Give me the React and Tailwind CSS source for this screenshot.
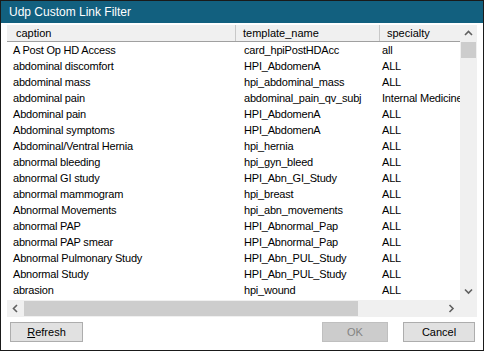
import React from "react";

const rows = [
  ["A Post Op HD Access", "card_hpiPostHDAcc", "all"],
  ["abdominal discomfort", "HPI_AbdomenA", "ALL"],
  ["abdominal mass", "hpi_abdominal_mass", "ALL"],
  ["abdominal pain", "abdominal_pain_qv_subj", "Internal Medicine"],
  ["Abdominal pain", "HPI_AbdomenA", "ALL"],
  ["Abdominal symptoms", "HPI_AbdomenA", "ALL"],
  ["Abdominal/Ventral Hernia", "hpi_hernia", "ALL"],
  ["abnormal bleeding", "hpi_gyn_bleed", "ALL"],
  ["abnormal GI study", "HPI_Abn_GI_Study", "ALL"],
  ["abnormal mammogram", "hpi_breast", "ALL"],
  ["Abnormal Movements", "hpi_abn_movements", "ALL"],
  ["abnormal PAP", "HPI_Abnormal_Pap", "ALL"],
  ["abnormal PAP smear", "HPI_Abnormal_Pap", "ALL"],
  ["Abnormal Pulmonary Study", "HPI_Abn_PUL_Study", "ALL"],
  ["Abnormal Study", "HPI_Abn_PUL_Study", "ALL"],
  ["abrasion", "hpi_wound", "ALL"],
];

// little scrollbar chevrons
const Chevron = ({ dir }) => {
  const pts = {
    up: "1,5 4.5,1.5 8,5",
    down: "1,1.5 4.5,5 8,1.5",
    left: "5,1 1.5,4.5 5,8",
    right: "1.5,1 5,4.5 1.5,8",
  }[dir];
  const vertical = dir === "up" || dir === "down";
  return (
    <svg
      width={vertical ? 9 : 7}
      height={vertical ? 7 : 9}
      viewBox={vertical ? "0 0 9 7" : "0 0 7 9"}
    >
      <polyline points={pts} fill="none" stroke="#606060" strokeWidth="1.6" />
    </svg>
  );
};

const App = () => {
  return (
    <div
      className="w-[484px] h-[351px] border border-[#1a1a1a] bg-white flex flex-col text-[11px] text-black"
      style={{ fontFamily: '"Liberation Sans", Arial, sans-serif' }}
    >
      <div className="h-[22px] bg-[#12607f] flex items-center pl-[8px] text-white text-[12px]">
        Udp Custom Link Filter
      </div>

      <div className="mt-[2px] ml-[6px] w-[470px] flex flex-col">
        <div className="flex h-[275px]">
          {/* table area */}
          <div className="w-[453px] overflow-hidden">
            <div className="flex h-[17px] bg-[#f0f0f0] border-b border-[#a0a0a0] whitespace-nowrap">
              <div className="w-[229px] shrink-0 pl-[9px] flex items-center border-r border-[#c8c8c8]">
                caption
              </div>
              <div className="w-[144px] shrink-0 pl-[7px] flex items-center border-r border-[#c8c8c8]">
                template_name
              </div>
              <div className="w-[120px] shrink-0 pl-[7px] flex items-center">
                specialty
              </div>
            </div>
            {rows.map((r, i) => (
              <div key={i} className="flex h-[16px] items-center whitespace-nowrap tracking-[-0.2px]">
                <div className="w-[230px] shrink-0 pl-[6px]">{r[0]}</div>
                <div className="w-[143px] shrink-0 pl-[7px]">{r[1]}</div>
                <div className="w-[120px] shrink-0 pl-[2px]">{r[2]}</div>
              </div>
            ))}
          </div>
          {/* vertical scrollbar */}
          <div className="w-[17px] bg-[#f0f0f0] flex flex-col">
            <div className="h-[17px] flex items-center justify-center">
              <Chevron dir="up" />
            </div>
            <div className="h-[16px] mx-[1px] bg-[#cdcdcd]" />
            <div className="flex-1" />
            <div className="h-[17px] flex items-center justify-center">
              <Chevron dir="down" />
            </div>
          </div>
        </div>
        {/* horizontal scrollbar */}
        <div className="h-[17px] bg-[#f0f0f0] flex">
          <div className="w-[17px] flex items-center justify-center">
            <Chevron dir="left" />
          </div>
          <div className="w-[334px] my-[1px] bg-[#cdcdcd]" />
          <div className="flex-1" />
          <div className="w-[17px] flex items-center justify-center">
            <Chevron dir="right" />
          </div>
          <div className="w-[17px]" />
        </div>
      </div>

      <div className="mt-[5px] flex items-center pl-[9px] pr-[8px]">
        <button className="w-[73px] h-[20px] border border-[#adadad] bg-[#e1e1e1]">
          <span className="underline">R</span>efresh
        </button>
        <div className="flex-1" />
        <button className="w-[66px] h-[20px] border border-[#bfbfbf] bg-[#cccccc] text-[#838383]">
          OK
        </button>
        <button className="ml-[15px] w-[72px] h-[20px] border border-[#adadad] bg-[#e1e1e1]">
          Cancel
        </button>
      </div>
    </div>
  );
};

export default App;
